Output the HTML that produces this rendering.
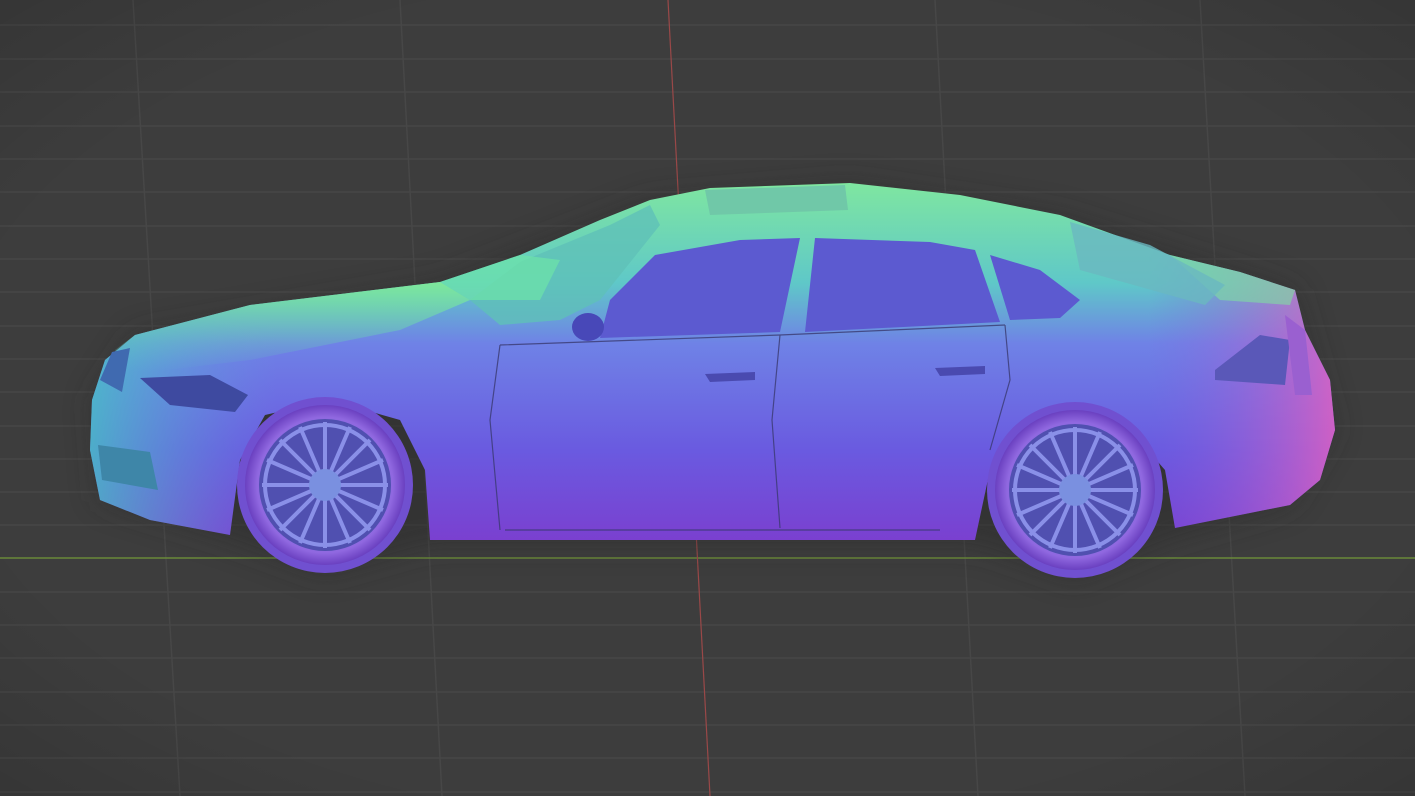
<!DOCTYPE html>
<html><head><meta charset="utf-8"><style>html,body{margin:0;padding:0;background:#3d3d3d;overflow:hidden}svg{display:block}</style></head>
<body>
<svg width="1415" height="796" viewBox="0 0 1415 796" xmlns="http://www.w3.org/2000/svg">
<defs>
<linearGradient id="body" x1="0" y1="0" x2="0" y2="1">
<stop offset="0" stop-color="#7fe6a0"/>
<stop offset="0.28" stop-color="#5fc8c8"/>
<stop offset="0.45" stop-color="#6f82e6"/>
<stop offset="0.75" stop-color="#6a5ae0"/>
<stop offset="1" stop-color="#7a40d0"/>
</linearGradient>
<linearGradient id="side" x1="0" y1="0" x2="1" y2="0">
<stop offset="0" stop-color="#40d0c0" stop-opacity="0.7"/>
<stop offset="0.15" stop-color="#60a0e0" stop-opacity="0"/>
<stop offset="0.85" stop-color="#8060e0" stop-opacity="0"/>
<stop offset="1" stop-color="#e060c0" stop-opacity="0.85"/>
</linearGradient>
<linearGradient id="hood" x1="0" y1="0" x2="0" y2="1">
<stop offset="0" stop-color="#7ee89a"/>
<stop offset="1" stop-color="#60c8c0" stop-opacity="0"/>
</linearGradient>
<radialGradient id="wheel" cx="0.5" cy="0.5" r="0.5">
<stop offset="0.6" stop-color="#8078e6"/>
<stop offset="0.85" stop-color="#9068e0"/>
<stop offset="1" stop-color="#6a40c0"/>
</radialGradient>
<radialGradient id="vig" cx="0.5" cy="0.5" r="0.75">
<stop offset="0.7" stop-color="#000" stop-opacity="0"/>
<stop offset="1" stop-color="#000" stop-opacity="0.15"/>
</radialGradient>
<filter id="blur"><feGaussianBlur stdDeviation="14"/></filter>
</defs>
<rect width="1415" height="796" fill="#3d3d3d"/>
<g stroke="#474747" stroke-width="1.5">
<line x1="0" y1="25" x2="1415" y2="25"/><line x1="0" y1="59" x2="1415" y2="59"/><line x1="0" y1="92" x2="1415" y2="92"/><line x1="0" y1="126" x2="1415" y2="126"/><line x1="0" y1="159" x2="1415" y2="159"/><line x1="0" y1="192" x2="1415" y2="192"/><line x1="0" y1="226" x2="1415" y2="226"/><line x1="0" y1="259" x2="1415" y2="259"/><line x1="0" y1="292" x2="1415" y2="292"/><line x1="0" y1="326" x2="1415" y2="326"/><line x1="0" y1="359" x2="1415" y2="359"/><line x1="0" y1="392" x2="1415" y2="392"/><line x1="0" y1="426" x2="1415" y2="426"/><line x1="0" y1="459" x2="1415" y2="459"/><line x1="0" y1="492" x2="1415" y2="492"/><line x1="0" y1="525" x2="1415" y2="525"/><line x1="0" y1="592" x2="1415" y2="592"/><line x1="0" y1="625" x2="1415" y2="625"/><line x1="0" y1="658" x2="1415" y2="658"/><line x1="0" y1="692" x2="1415" y2="692"/><line x1="0" y1="725" x2="1415" y2="725"/><line x1="0" y1="758" x2="1415" y2="758"/><line x1="0" y1="792" x2="1415" y2="792"/>
<line x1="133" y1="0" x2="180" y2="796"/><line x1="400" y1="0" x2="442" y2="796"/><line x1="935" y1="0" x2="978" y2="796"/><line x1="1200" y1="0" x2="1245" y2="796"/>
</g>
<line x1="0" y1="558" x2="1415" y2="558" stroke="#6a8a3a" stroke-width="1.5"/>
<line x1="668" y1="0" x2="710" y2="796" stroke="#9a4848" stroke-width="1.2"/>
<rect width="1415" height="796" fill="url(#vig)"/>
<path d="M92,400 L135,335 L440,282 L650,200 L850,183 L1060,215 L1295,290 L1335,430 L1290,505 L1170,540 L1075,580 L975,545 L430,545 L325,575 L230,540 L100,500 Z" fill="#2a2a2a" opacity="0.5" filter="url(#blur)"/>
<path d="M92,400 L105,360 L135,335 L250,305 L440,282 L520,255 L600,220 L650,200 L710,188 L850,183 L960,195 L1060,215 L1170,255 L1240,272 L1295,290 L1305,330 L1330,380 L1335,430 L1320,480 L1290,505 L1175,528 L1165,470 L1130,430 L1075,410 L1020,425 L990,470 L975,540 L430,540 L425,470 L400,420 L330,400 L265,415 L240,460 L230,535 L150,520 L100,500 L90,450 Z" fill="url(#body)"/>
<path d="M92,400 L105,360 L135,335 L250,305 L440,282 L520,255 L600,220 L650,200 L710,188 L850,183 L960,195 L1060,215 L1170,255 L1240,272 L1295,290 L1305,330 L1330,380 L1335,430 L1320,480 L1290,505 L1175,528 L1165,470 L1130,430 L1075,410 L1020,425 L990,470 L975,540 L430,540 L425,470 L400,420 L330,400 L265,415 L240,460 L230,535 L150,520 L100,500 L90,450 Z" fill="url(#side)"/>
<path d="M115,350 L135,335 L250,305 L440,282 L470,300 L400,330 L250,360 L150,372 L120,370 Z" fill="url(#hood)"/>
<path d="M1170,255 L1240,272 L1295,290 L1290,305 L1220,300 Z" fill="#7ee0a0" opacity="0.6"/>
<!-- windows -->
<path d="M470,300 L520,262 L610,225 L650,205 L660,225 L600,300 L560,320 L500,325 Z" fill="#5fc0b8" opacity="0.8"/>
<path d="M610,300 L655,255 L740,240 L800,238 L780,332 L600,338 Z" fill="#5c5ad0"/>
<path d="M815,238 L930,242 L975,250 L1000,322 L805,332 Z" fill="#5c5ad0"/>
<path d="M990,255 L1040,270 L1080,300 L1060,318 L1010,320 Z" fill="#5c5ad0"/>
<path d="M1070,222 L1150,245 L1225,285 L1205,305 L1080,270 Z" fill="#6ab8c0" opacity="0.8"/>
<path d="M705,190 L845,185 L848,210 L710,215 Z" fill="#70c8a8"/>
<path d="M440,282 L520,255 L560,260 L540,300 L470,300 Z" fill="#6de4a8" opacity="0.7"/>
<g fill="none" stroke="#3a3a70" stroke-width="1.2" opacity="0.8">
<path d="M500,345 L490,420 L500,530"/><path d="M780,335 L772,420 L780,528"/><path d="M1005,325 L1010,380 L990,450"/>
<path d="M500,345 L780,335 L1005,325"/><path d="M505,530 L940,530"/>
</g>
<path d="M705,374 L755,372 L755,380 L710,382 Z" fill="#4a4ab0"/>
<path d="M935,368 L985,366 L985,374 L940,376 Z" fill="#4a4ab0"/>
<ellipse cx="588" cy="327" rx="16" ry="14" fill="#4848b8"/>
<path d="M140,378 L210,375 L248,395 L235,412 L170,405 Z" fill="#3e4aa0"/>
<path d="M100,380 L112,352 L130,348 L122,392 Z" fill="#406ab0"/>
<path d="M98,445 L150,452 L158,490 L102,480 Z" fill="#3e86a8"/>
<path d="M1215,370 L1260,335 L1290,340 L1285,385 L1215,380 Z" fill="#5a58b8"/>
<path d="M1285,315 L1305,330 L1312,395 L1295,395 Z" fill="#9a60d0"/>
<g>
<circle cx="325" cy="485" r="88" fill="#7050d0"/>
<circle cx="325" cy="485" r="80" fill="url(#wheel)"/>
<circle cx="325" cy="485" r="66" fill="#5050b0"/>
<g stroke="#8a90e8" stroke-width="4" fill="none">
<line x1="325" y1="422" x2="325" y2="548"/><line x1="262" y1="485" x2="388" y2="485"/><line x1="280" y1="440" x2="370" y2="530"/><line x1="370" y1="440" x2="280" y2="530"/>
<line x1="300" y1="427" x2="350" y2="543"/><line x1="350" y1="427" x2="300" y2="543"/><line x1="267" y1="460" x2="383" y2="510"/><line x1="267" y1="510" x2="383" y2="460"/>
<circle cx="325" cy="485" r="60"/>
</g>
<circle cx="325" cy="485" r="16" fill="#7a90e0"/>
</g>
<g>
<circle cx="1075" cy="490" r="88" fill="#7050d0"/>
<circle cx="1075" cy="490" r="80" fill="url(#wheel)"/>
<circle cx="1075" cy="490" r="66" fill="#5050b0"/>
<g stroke="#8a90e8" stroke-width="4" fill="none">
<line x1="1075" y1="427" x2="1075" y2="553"/><line x1="1012" y1="490" x2="1138" y2="490"/><line x1="1030" y1="445" x2="1120" y2="535"/><line x1="1120" y1="445" x2="1030" y2="535"/>
<line x1="1050" y1="432" x2="1100" y2="548"/><line x1="1100" y1="432" x2="1050" y2="548"/><line x1="1017" y1="465" x2="1133" y2="515"/><line x1="1017" y1="515" x2="1133" y2="465"/>
<circle cx="1075" cy="490" r="60"/>
</g>
<circle cx="1075" cy="490" r="16" fill="#7a90e0"/>
</g>
</svg>
</body></html>
